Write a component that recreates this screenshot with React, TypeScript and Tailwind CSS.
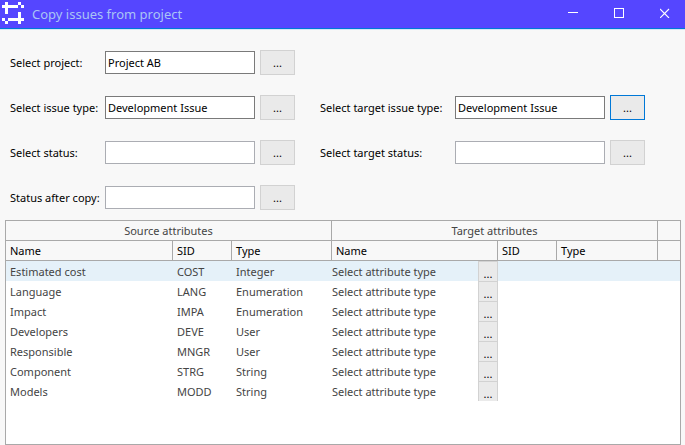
import {useState} from "react"

interface Attribute {
  name: string
  sid: string
  type: string
}

const ATTRIBUTES: Attribute[] = [
  {name: "Estimated cost", sid: "COST", type: "Integer"},
  {name: "Language", sid: "LANG", type: "Enumeration"},
  {name: "Impact", sid: "IMPA", type: "Enumeration"},
  {name: "Developers", sid: "DEVE", type: "User"},
  {name: "Responsible", sid: "MNGR", type: "User"},
  {name: "Component", sid: "STRG", type: "String"},
  {name: "Models", sid: "MODD", type: "String"},
]

export default function App() {
  return (
    <div className="flex min-h-screen flex-col bg-[#f8f8f8] font-['Noto_Sans',sans-serif] text-[11px] text-black">
      <TitleBar />
      <Form />
      <AttributeTable />
    </div>
  )
}

function TitleBar() {
  return (
    <header className="flex h-[29px] shrink-0 items-center border-b border-[#0078d7] bg-[#5546ff] shadow-[0_1px_0_#d5e6f5]">
      <Logo />
      <h1 className="ml-2 flex-1 pt-[2px] text-[13px] text-[#a9c4f5]">
        Copy issues from project
      </h1>
      <div className="flex h-full gap-[6px] pb-[2px] text-white">
        <button aria-label="Minimize" className="flex w-10 items-center justify-center">
          <svg width="10" height="10" shapeRendering="crispEdges">
            <path d="M0 4.5h10" stroke="currentColor" />
          </svg>
        </button>
        <button aria-label="Maximize" className="flex w-10 items-center justify-center">
          <svg width="10" height="10" shapeRendering="crispEdges">
            <rect x="0.5" y="0.5" width="9" height="9" fill="none" stroke="currentColor" />
          </svg>
        </button>
        <button aria-label="Close" className="flex w-10 items-center justify-center">
          <svg width="10" height="10">
            <path d="M0 1l9 9M9 1l-9 9" stroke="currentColor" strokeWidth="1.1" />
          </svg>
        </button>
      </div>
    </header>
  )
}

function Logo() {
  return (
    <svg
      width="22"
      height="22"
      className="mb-[2px] ml-[2px] shrink-0"
      fill="white"
      shapeRendering="crispEdges"
      aria-hidden="true"
    >
      <path d="M0 3h16v3H0zM3 0h3v12H3zM16 0h3v3h-3zM19 3h3v3h-3z" />
      <path d="M6 16h16v3H6zM16 10h3v12h-3zM0 16h3v3H0zM3 19h3v3H3z" />
    </svg>
  )
}

function Form() {
  return (
    <form className="grid grid-cols-[285px_325px] gap-x-[25px] gap-y-5 px-[10px] pt-[21px] pb-[10px]">
      <Field id="project" label="Select project:" value="Project AB" />
      <span />
      <Field id="issue-type" label="Select issue type:" value="Development Issue" />
      <Field id="target-issue-type" label="Select target issue type:" value="Development Issue" wide focused />
      <Field id="status" label="Select status:" value="" />
      <Field id="target-status" label="Select target status:" value="" wide />
      <Field id="status-after" label="Status after copy:" value="" />
    </form>
  )
}

function Field(props: {
  id: string
  label: string
  value: string
  wide?: boolean
  focused?: boolean
}) {
  const [value, setValue] = useState(props.value)

  return (
    <div className="flex items-center">
      <label
        htmlFor={props.id}
        className={`shrink-0 pt-[2px] whitespace-nowrap ${props.wide ? "w-[135px]" : "w-[95px]"}`}
      >
        {props.label}
      </label>
      <input
        id={props.id}
        value={value}
        onChange={e => setValue(e.target.value)}
        className={`
          mr-[5px] h-[23px] w-[150px] border bg-white px-[2px] outline-none
          ${props.value ? "border-[#7a7a7a]" : "border-[#abadb3]"}
        `}
      />
      <button
        type="button"
        aria-label={`${props.label} browse`}
        className={`
          h-[25px] w-[35px] border bg-[#eaeaea] pt-[2px]
          ${props.focused ? "border-[#0078d7]" : "border-[#d2d2d2]"}
        `}
      >
        ...
      </button>
    </div>
  )
}

function AttributeTable() {
  const [selected, setSelected] = useState(0)

  return (
    <div className="mr-1 ml-[5px] flex-1 border border-[#a9a9a9] bg-white">
      <table className="w-full table-fixed border-separate border-spacing-0 text-left leading-[19px] whitespace-nowrap">
        <colgroup>
          <col className="w-[167px]" />
          <col className="w-[59px]" />
          <col className="w-[100px]" />
          <col className="w-[166px]" />
          <col className="w-[59px]" />
          <col className="w-[101px]" />
          <col />
        </colgroup>
        <thead className="bg-[#f8f8f8]">
          <tr className="text-[#444444]">
            <GroupHeader>Source attributes</GroupHeader>
            <GroupHeader>Target attributes</GroupHeader>
            <td className="border-b border-[#a9a9a9]" />
          </tr>
          <tr>
            <ColumnHeader>Name</ColumnHeader>
            <ColumnHeader>SID</ColumnHeader>
            <ColumnHeader>Type</ColumnHeader>
            <ColumnHeader>Name</ColumnHeader>
            <ColumnHeader>SID</ColumnHeader>
            <ColumnHeader>Type</ColumnHeader>
            <td className="border-b border-[#a9a9a9]" />
          </tr>
        </thead>
        <tbody className="text-[#444444]">
          {ATTRIBUTES.map((attribute, index) => (
            <tr
              key={attribute.sid}
              className={`h-5 ${index === selected ? "bg-[#e5f1f9]" : ""}`}
              onClick={() => setSelected(index)}
            >
              <td className="p-0 pl-1">{attribute.name}</td>
              <td className="p-0 pl-1">{attribute.sid}</td>
              <td className="p-0 pl-1">{attribute.type}</td>
              <td className="p-0">
                <div className="flex h-5 items-center justify-between">
                  Select attribute type
                  <button
                    aria-label={`Select attribute type for ${attribute.name}`}
                    className="h-5 w-5 border-x border-t border-[#d2d2d2] bg-[#eaeaea] pt-1 leading-4 text-black"
                  >
                    ...
                  </button>
                </div>
              </td>
              <td />
              <td />
              <td />
            </tr>
          ))}
        </tbody>
      </table>
    </div>
  )
}

function GroupHeader(props: {children: string}) {
  return (
    <th
      colSpan={3}
      scope="colgroup"
      className="border-r border-b border-[#a9a9a9] p-0 text-center font-normal"
    >
      {props.children}
    </th>
  )
}

function ColumnHeader(props: {children: string}) {
  return (
    <th
      scope="col"
      className="border-r border-b border-[#a9a9a9] p-0 pl-1 font-normal"
    >
      {props.children}
    </th>
  )
}
